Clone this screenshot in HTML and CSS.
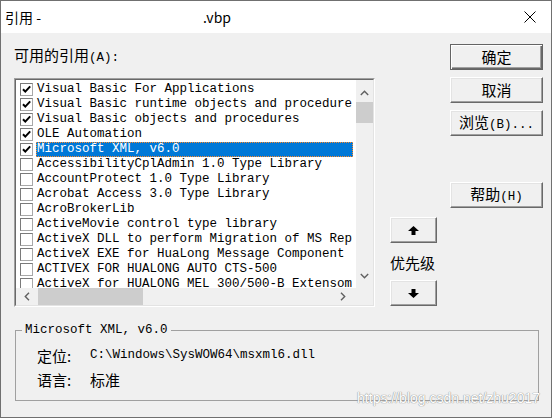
FILE: index.html
```html
<!DOCTYPE html>
<html lang="zh-CN">
<head>
  <meta charset="UTF-8">
  <title>引用</title>
  <link rel="stylesheet" href="styles.css">
</head>
<body>

<div class="dialog">

  <!-- 标题栏 -->
  <div class="titlebar">
    <span class="title">引用 -</span>
    <span class="title-ext">.vbp</span>
    <svg class="close" width="12" height="12" viewBox="0 0 12 12">
      <path d="M0.5 0.5 L11.5 11.5 M11.5 0.5 L0.5 11.5" stroke="#000" stroke-width="1" fill="none"/>
    </svg>
  </div>

  <div class="client">
    <div class="main">

      <!-- 引用列表 -->
      <div class="col-list">
        <div class="caption">可用的引用<span class="mono">(A):</span></div>
        <div class="listbox">
          <div class="listbox-in">
            <div class="rows">
              <div class="row"><span class="chk"><svg width="11" height="11" viewBox="0 0 11 11"><path d="M2 5.2 L4.3 7.6 L9.2 2.4" stroke="#000" stroke-width="2" fill="none"/></svg></span><span class="label">Visual Basic For Applications</span></div>
              <div class="row"><span class="chk"><svg width="11" height="11" viewBox="0 0 11 11"><path d="M2 5.2 L4.3 7.6 L9.2 2.4" stroke="#000" stroke-width="2" fill="none"/></svg></span><span class="label">Visual Basic runtime objects and procedure</span></div>
              <div class="row"><span class="chk"><svg width="11" height="11" viewBox="0 0 11 11"><path d="M2 5.2 L4.3 7.6 L9.2 2.4" stroke="#000" stroke-width="2" fill="none"/></svg></span><span class="label">Visual Basic objects and procedures</span></div>
              <div class="row"><span class="chk"><svg width="11" height="11" viewBox="0 0 11 11"><path d="M2 5.2 L4.3 7.6 L9.2 2.4" stroke="#000" stroke-width="2" fill="none"/></svg></span><span class="label">OLE Automation</span></div>
              <div class="row sel"><span class="chk"><svg width="11" height="11" viewBox="0 0 11 11"><path d="M2 5.2 L4.3 7.6 L9.2 2.4" stroke="#000" stroke-width="2" fill="none"/></svg></span><span class="label">Microsoft XML, v6.0</span></div>
              <div class="row"><span class="chk"></span><span class="label">AccessibilityCplAdmin 1.0 Type Library</span></div>
              <div class="row"><span class="chk"></span><span class="label">AccountProtect 1.0 Type Library</span></div>
              <div class="row"><span class="chk"></span><span class="label">Acrobat Access 3.0 Type Library</span></div>
              <div class="row"><span class="chk"></span><span class="label">AcroBrokerLib</span></div>
              <div class="row"><span class="chk"></span><span class="label">ActiveMovie control type library</span></div>
              <div class="row"><span class="chk"></span><span class="label">ActiveX DLL to perform Migration of MS Rep</span></div>
              <div class="row"><span class="chk"></span><span class="label">ActiveX EXE for HuaLong Message Component</span></div>
              <div class="row"><span class="chk"></span><span class="label">ACTIVEX FOR HUALONG AUTO CTS-500</span></div>
              <div class="row"><span class="chk"></span><span class="label">ActiveX for HUALONG MEL 300/500-B Extensom</span></div>
            </div>

            <!-- 垂直滚动条 -->
            <div class="vscroll">
              <div class="sb-arrow up"><svg width="9" height="6" viewBox="0 0 9 6"><polyline points="0.8,5 4.5,1.3 8.2,5" stroke="#606060" stroke-width="1.4" fill="none"/></svg></div>
              <div class="vthumb"></div>
              <div class="sb-space"></div>
              <div class="sb-arrow down"><svg width="9" height="6" viewBox="0 0 9 6"><polyline points="0.8,1 4.5,4.7 8.2,1" stroke="#606060" stroke-width="1.4" fill="none"/></svg></div>
            </div>

            <!-- 水平滚动条 -->
            <div class="hscroll">
              <div class="sb-arrow left"><svg width="6" height="9" viewBox="0 0 6 9"><polyline points="5,0.8 1.3,4.5 5,8.2" stroke="#606060" stroke-width="1.4" fill="none"/></svg></div>
              <div class="hthumb"></div>
              <div class="sb-space"></div>
              <div class="sb-arrow right"><svg width="6" height="9" viewBox="0 0 6 9"><polyline points="1,0.8 4.7,4.5 1,8.2" stroke="#606060" stroke-width="1.4" fill="none"/></svg></div>
            </div>
            <div class="corner"></div>
          </div>
        </div>
      </div>

      <!-- 优先级 -->
      <div class="col-priority">
        <button class="btn arrow-btn">
          <svg width="11" height="9" viewBox="0 0 11 9"><polygon points="5.5,0 11,5 7.5,5 7.5,9 3.5,9 3.5,5 0,5" fill="#000"/></svg>
        </button>
        <div class="priority-label">优先级</div>
        <button class="btn arrow-btn">
          <svg width="11" height="9" viewBox="0 0 11 9"><polygon points="3.5,0 7.5,0 7.5,4 11,4 5.5,9 0,4 3.5,4" fill="#000"/></svg>
        </button>
      </div>

      <!-- 按钮 -->
      <div class="col-buttons">
        <button class="btn default">确定</button>
        <button class="btn">取消</button>
        <button class="btn">浏览<span class="mono">(B)...</span></button>
        <button class="btn help">帮助<span class="mono">(H)</span></button>
      </div>
    </div>

    <!-- 选中引用的信息 -->
    <fieldset class="info">
      <legend class="mono">Microsoft XML, v6.0</legend>
      <div class="info-row"><span class="info-key">定位:</span><span class="mono">C:\Windows\SysWOW64\msxml6.dll</span></div>
      <div class="info-row"><span class="info-key">语言:</span><span>标准</span></div>
    </fieldset>
  </div>

  <div class="watermark">https://blog.csdn.net/zhu2017</div>
</div>

</body>
</html>
```

FILE: styles.css
```css
* {
  box-sizing: border-box;
}

body {
  margin: 0;
  background-color: #fff;
  font-family: "Noto Sans CJK SC", sans-serif;
  font-size: 15px;
  color: #000;
}

.mono {
  font-family: "Liberation Mono", monospace;
  font-size: 12.5px;
}

.dialog {
  position: relative;
  width: 552px;
  height: 418px;
  border: 1px solid #707070;
  background-color: #f0f0f0;
  display: flex;
  flex-direction: column;
}

/* 标题栏 */
.titlebar {
  height: 32px;
  background-color: #fff;
  display: flex;
  align-items: center;
  padding-left: 4px;
  font-size: 14px;
}

.title-ext {
  margin-left: 162px;
}

.close {
  margin-left: auto;
  margin-right: 15px;
}

.main {
  display: flex;
  height: 274px;
}

/* 列表 */
.col-list {
  margin-left: 13px;
  padding-top: 13px;
  width: 361px;
}

.caption {
  height: 18px;
  line-height: 18px;
  margin-bottom: 14px;
}

.listbox {
  width: 361px;
  height: 229px;
  border: 1px solid;
  border-color: #a0a0a0 #fff #fff #a0a0a0;
}

.listbox-in {
  height: 100%;
  border: 1px solid;
  border-color: #696969 #e3e3e3 #e3e3e3 #696969;
  display: grid;
  grid-template-columns: 340px 17px;
  grid-template-rows: 208px 17px;
}

.rows {
  background-color: #fff;
  overflow: hidden;
  padding-top: 2px;
}

.row {
  display: flex;
  align-items: center;
  height: 15px;
}

.chk {
  flex: none;
  width: 13px;
  height: 13px;
  margin-left: 4px;
  margin-right: 3px;
  border: 1px solid;
  border-color: #7a7a7a #a8a8a8 #a8a8a8 #7a7a7a;
  background-color: #fff;
  display: flex;
}

.label {
  flex: 1;
  min-width: 0;
  height: 15px;
  margin-right: 3px;
  padding-left: 1px;
  font-family: "Liberation Mono", monospace;
  font-size: 12.5px;
  line-height: 15px;
  white-space: nowrap;
  overflow: hidden;
}

.row.sel .label {
  background-color: #0078d7;
  color: #fff;
  outline: 1px dotted #ff8a2a;
  outline-offset: -1px;
}

/* 滚动条 */
.vscroll {
  background-color: #f0f0f0;
  display: flex;
  flex-direction: column;
}

.hscroll {
  background-color: #f0f0f0;
  display: flex;
}

.sb-space {
  flex: 1;
}

.sb-arrow {
  display: flex;
  align-items: center;
  justify-content: center;
}

.sb-arrow.up {
  height: 22px;
  padding-top: 3px;
}

.sb-arrow.down {
  height: 24px;
}

.sb-arrow.left {
  width: 21px;
}

.sb-arrow.right {
  width: 21px;
  margin-right: 3px;
}

.vthumb {
  height: 21px;
  background-color: #cdcdcd;
}

.hthumb {
  width: 105px;
  margin-left: 1px;
  background-color: #cdcdcd;
}

.corner {
  background-color: #f0f0f0;
}

/* 按钮 */
.btn {
  height: 26px;
  padding: 0;
  background-color: #f0f0f0;
  border: 1px solid;
  border-color: #fff #696969 #696969 #fff;
  box-shadow: inset -1px -1px #a0a0a0, inset 1px 1px #e3e3e3;
  font-family: "Noto Sans CJK SC", sans-serif;
  font-size: 15px;
  line-height: 22px;
  color: #000;
  text-align: center;
}

.btn.default {
  border-color: #646464;
  box-shadow: inset 1px 1px #fff, inset -1px -1px #696969, inset -2px -2px #a0a0a0;
}

.col-priority {
  margin-left: 15px;
  width: 47px;
  padding-top: 184px;
  display: flex;
  flex-direction: column;
}

.arrow-btn {
  display: flex;
  align-items: center;
  justify-content: center;
}

.priority-label {
  height: 18px;
  line-height: 18px;
  margin: 11px 0 8px;
  white-space: nowrap;
}

.col-buttons {
  margin-left: 13px;
  width: 93px;
  padding-top: 11px;
  display: flex;
  flex-direction: column;
  gap: 7px;
}

.btn.help {
  margin-top: 39px;
}

/* 信息框 */
.info {
  margin: 15px 0 0 14px;
  width: 524px;
  border: 1px solid #a0a0a0;
  padding: 5px 0 9px 6px;
  min-width: 0;
}

.info legend {
  padding: 0 3px;
  line-height: 16px;
}

.info-row {
  display: flex;
  align-items: center;
  height: 24px;
  margin-left: 15px;
}

.info-key {
  width: 53px;
}

.watermark {
  position: absolute;
  right: 11px;
  top: 389px;
  font-family: "Liberation Sans", sans-serif;
  font-size: 14px;
  color: #fff;
  text-shadow: 0 0 1px #8a8a8a, 0 0 1px #8a8a8a;
}
```
